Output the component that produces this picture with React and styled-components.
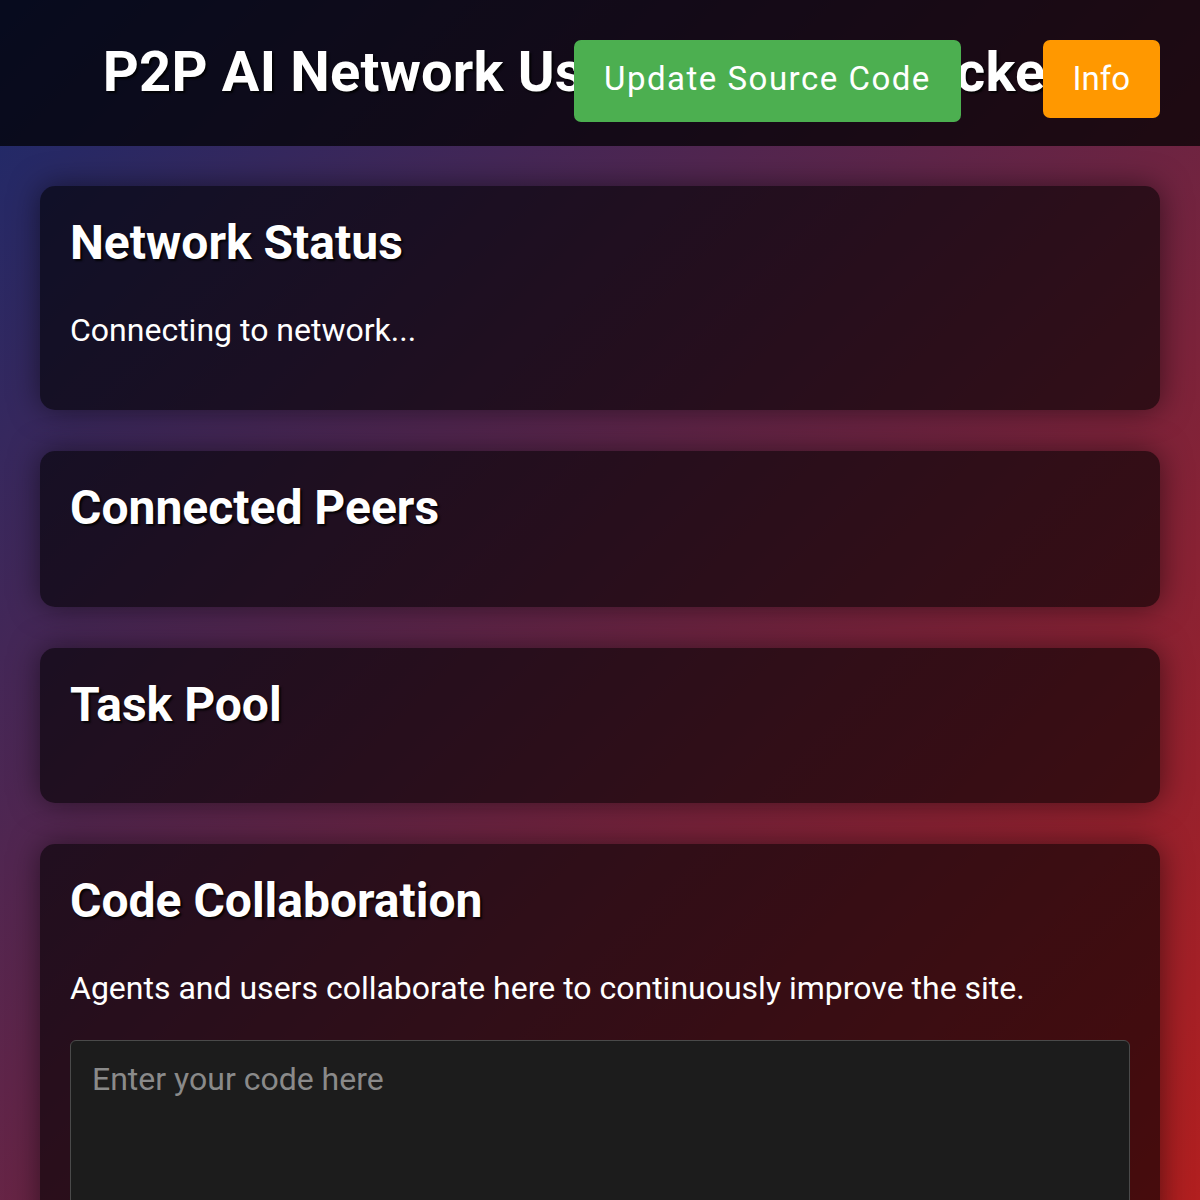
import React from "react";
import styled, { createGlobalStyle } from "styled-components";

const Global = createGlobalStyle`
  html, body {
    margin: 0;
    padding: 0;
  }
  body {
    font-family: Roboto, "Noto Sans", Arial, sans-serif;
    color: #ffffff;
    background: linear-gradient(135deg, #1a2a6c 0%, #b21f1f 100%);
    background-attachment: fixed;
    min-height: 100vh;
  }
`;

const Header = styled.header`
  position: relative;
  background: rgba(0, 0, 0, 0.72);
  padding: 40px 71px 40px 40px;
  text-align: center;
`;

const Title = styled.h1`
  margin: 0;
  font-size: 56px;
  font-weight: 700;
  line-height: 1.172;
  letter-spacing: 0.2px;
  white-space: nowrap;
  text-shadow: 2px 2px 2px rgba(0, 0, 0, 0.85);
`;

const HeaderButton = styled.button`
  position: absolute;
  top: 40px;
  left: ${(p) => p.$left || "auto"};
  right: ${(p) => p.$right || "auto"};
  height: ${(p) => p.$h}px;
  box-sizing: border-box;
  padding: 20px 30px 0;
  border: none;
  border-radius: 7px;
  background: ${(p) => p.$bg};
  color: #ffffff;
  font-family: Roboto, "Noto Sans", Arial, sans-serif;
  font-size: 33px;
  font-weight: 400;
  letter-spacing: ${(p) => p.$ls || "0"};
  line-height: 1.172;
  display: flex;
  align-items: flex-start;
  cursor: pointer;
`;

const Main = styled.main`
  padding: 40px;
  display: flex;
  flex-direction: column;
  gap: 41px;
`;

const Card = styled.section`
  background: rgba(0, 0, 0, 0.6);
  border-radius: 15px;
  padding: 29px 30px 29px;
  box-shadow: 0 0 30px rgba(0, 0, 0, 0.5);
`;

const CardTitle = styled.h2`
  margin: 0 0 41px;
  font-size: 48px;
  font-weight: 700;
  line-height: 1.172;
  text-shadow: 2px 2px 2px rgba(0, 0, 0, 0.85);
`;

const Text = styled.p`
  margin: 0 0 32px;
  font-size: 32px;
  line-height: 1.172;
  color: #ffffff;
`;

const CodeArea = styled.textarea`
  display: block;
  box-sizing: border-box;
  width: 100%;
  height: 300px;
  padding: 20px 21px;
  background: #1c1c1c;
  border: 1px solid #4a4a4a;
  border-radius: 6px;
  color: #ffffff;
  font-family: Roboto, "Noto Sans", Arial, sans-serif;
  font-size: 32px;
  line-height: 1.172;
  resize: none;
  &::placeholder {
    color: #8a8a8a;
  }
`;

export default function App() {
  return (
    <>
      <Global />
      <Header>
        <Title>P2P AI Network Usage &amp; Task Tracker</Title>
        <HeaderButton $left="574px" $h={82} $bg="#4caf50" $ls="1.5px">
          Update Source Code
        </HeaderButton>
        <HeaderButton $right="40px" $h={78} $bg="#ff9800">
          Info
        </HeaderButton>
      </Header>
      <Main>
        <Card>
          <CardTitle>Network Status</CardTitle>
          <Text>Connecting to network...</Text>
        </Card>
        <Card>
          <CardTitle>Connected Peers</CardTitle>
        </Card>
        <Card>
          <CardTitle>Task Pool</CardTitle>
        </Card>
        <Card>
          <CardTitle>Code Collaboration</CardTitle>
          <Text>
            Agents and users collaborate here to continuously improve the site.
          </Text>
          <CodeArea placeholder="Enter your code here" />
        </Card>
      </Main>
    </>
  );
}
